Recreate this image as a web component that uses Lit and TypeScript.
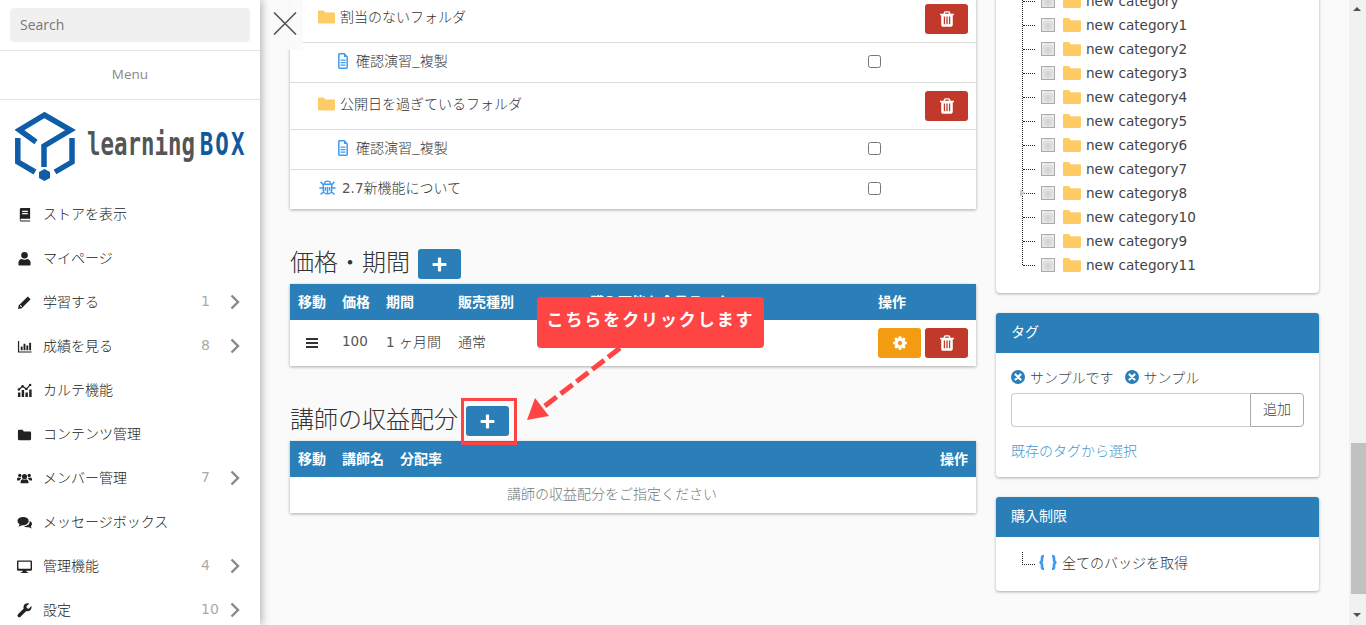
import { LitElement, html, css, svg } from "lit";
import { customElement } from "lit/decorators.js";

const TRASH = "M704 1376v-704q0-14-9-23t-23-9h-64q-14 0-23 9t-9 23v704q0 14 9 23t23 9h64q14 0 23-9t9-23zm256 0v-704q0-14-9-23t-23-9h-64q-14 0-23 9t-9 23v704q0 14 9 23t23 9h64q14 0 23-9t9-23zm256 0v-704q0-14-9-23t-23-9h-64q-14 0-23 9t-9 23v704q0 14 9 23t23 9h64q14 0 23-9t9-23zm-544-992h448l-48-117q-7-9-17-11h-317q-10 2-17 11zm928 32v64q0 14-9 23t-23 9h-96v948q0 83-47 143.500t-113 60.500h-832q-66 0-113-58.500t-47-141.500v-952h-96q-14 0-23-9t-9-23v-64q0-14 9-23t23-9h309l70-167q15-37 54-63t79-26h320q40 0 79 26t54 63l70 167h309q14 0 23 9t9 23z";
const COG = "M1152 896q0-106-75-181t-181-75-181 75-75 181 75 181 181 75 181-75 75-181zm512-109v222q0 12-8 23t-20 13l-185 28q-19 54-39 91 35 50 107 138 10 12 10 25t-9 23q-27 37-99 108t-94 71q-12 0-26-9l-138-108q-44 23-91 38-16 136-29 186-7 28-36 28h-222q-14 0-24.500-8.500t-11.500-21.500l-28-184q-49-16-90-37l-141 107q-10 9-25 9-14 0-25-11-126-114-165-168-7-10-7-23 0-12 8-23 15-21 51-66.500t54-70.500q-27-50-41-99l-183-27q-13-2-21-12.500t-8-23.500v-222q0-12 8-23t19-13l186-28q14-46 39-92-40-57-107-138-10-12-10-24 0-10 9-23 26-36 98.500-107.500t94.500-71.500q13 0 26 10l138 107q44-23 91-38 16-136 29-186 7-28 36-28h222q14 0 24.500 8.500t11.500 21.500l28 184q49 16 90 37l142-107q9-9 24-9 13 0 25 10 129 119 165 170 7 8 7 22 0 12-8 23-15 21-51 66.500t-54 70.500q26 50 41 98l183 28q13 2 21 12.500t8 23.500z";

const icons: Record<string, unknown> = {
  book: svg`<path d="M3 2.500A1.500 1.500 0 0 1 4.500 1H14v11.500H4.500a.9.9 0 0 0 0 1.800H14V15.500H4.500A1.800 1.800 0 0 1 3 14z"/><path fill="#fff" d="M5.500 4h6v1.200h-6zM5.500 6.500h6v1.200h-6z"/>`,
  user: svg`<circle cx="8" cy="4.500" r="3.500"/><path d="M1.500 14.500v-2c0-2.500 2-4 3.500-4 .8.500 1.800.9 3 .9s2.200-.4 3-.9c1.500 0 3.500 1.500 3.500 4v2c0 .6-.4 1-1 1h-11c-.6 0-1-.4-1-1z"/>`,
  pencil: svg`<path d="M11.500 1.500l3 3-9.500 9.500-4 1 1-4z"/><path fill="#fff" d="M3 11.500l.8-.8 1.500 1.500-.8.800z"/>`,
  chart: svg`<path d="M1 2h1.300v11.200H15.500V14.500H1z"/><path d="M4 8h2v4H4zM7 5h2v7H7zM10 7h2v5h-2zM13 4h2v8h-2z"/>`,
  karte: svg`<path d="M1 10h2.600v5H1zM5 7.500h2.600V15H5zM9 10h2.600v5H9zM13 7h2.600v8H13z"/><path fill="none" stroke="currentColor" stroke-width="1.300" d="M2 7l4-3.500 4 3 4-4.500"/><circle cx="2" cy="7" r="1.300"/><circle cx="6" cy="3.500" r="1.300"/><circle cx="10" cy="6.500" r="1.300"/><circle cx="14" cy="2" r="1.300"/>`,
  folder: svg`<path d="M1 4.200C1 3.500 1.500 3 2.200 3h3.600l1.500 1.700h6.500c.7 0 1.200.5 1.200 1.200v6.900c0 .7-.5 1.200-1.200 1.200H2.200c-.7 0-1.200-.5-1.200-1.200z"/>`,
  users: svg`<circle cx="8" cy="6" r="2.700"/><circle cx="3" cy="4.800" r="1.800"/><circle cx="13" cy="4.800" r="1.800"/><path d="M3.800 13v-1.500c0-1.700 1.300-2.800 2.500-2.800.5.300 1 .5 1.700.5s1.200-.2 1.700-.5c1.200 0 2.500 1.100 2.500 2.800V13z"/><path d="M0 10V8.800C0 7.700.8 7 1.700 7c.4.300.8.400 1.300.4.300 0 .5 0 .8-.1.200.4.400.7.700 1-1 .4-1.700 1.200-2 1.700zM16 10V8.800c0-1.100-.8-1.800-1.700-1.800-.4.300-.8.400-1.300.4-.3 0-.5 0-.8-.1-.2.4-.4.7-.7 1 1 .4 1.700 1.200 2 1.700z"/>`,
  comments: svg`<ellipse cx="6.500" cy="6.500" rx="6" ry="4.500"/><path d="M3 9.500l-1.500 3 4-1.500z"/><path d="M13.500 6.300c1.500.7 2.500 1.900 2.500 3.200 0 1-.5 1.800-1.300 2.500l1 2.300-3-1.300c-1.900.4-4 0-5.200-1.100 3.500-.1 6.500-2.400 6-5.600z"/>`,
  desktop: svg`<path fill-rule="evenodd" d="M0 2.800C0 2.100.5 1.500 1.200 1.500h13.600c.7 0 1.200.6 1.200 1.300v8.400c0 .7-.5 1.300-1.200 1.300H10l.4 1.500h1.600v1H4v-1h1.600l.4-1.500H1.200C.5 12.500 0 11.900 0 11.200zM1.500 3v7.500h13V3z"/>`,
  wrench: svg`<path d="M15.500 4.500c0 2.500-2 4.300-4.300 4.300-.5 0-.9-.1-1.300-.2L3.800 14.700c-.8.800-2 .8-2.700 0-.8-.8-.8-2 0-2.700l6.100-6.100c-.2-.5-.3-1-.3-1.500C6.900 2.100 8.900.3 11.200.3c.6 0 1.200.1 1.700.4L10 3.500l.5 2 2 .6 2.800-2.900c.1.300.2.700.2 1.300z"/>`,
};

function icon(name: string) {
  return html`<svg class="micon" viewBox="0 0 16 16" fill="currentColor">${icons[name]}</svg>`;
}
const folderIcon = (cls: string) => html`<svg class=${cls} viewBox="0 0 18 14"><path fill="#ffcb66" d="M0 1.200C0 .5.500 0 1.200 0h4.600l2 2.200h9C17.500 2.200 18 2.700 18 3.400v9.400c0 .7-.5 1.200-1.200 1.200H1.200C.5 14 0 13.500 0 12.800z"/></svg>`;
const docIcon = html`<svg class="doc" viewBox="0 0 10 16"><path fill="none" stroke="#3f9bf2" stroke-width="1.500" d="M.8 1.500c0-.4.3-.7.7-.7h4.800L9.200 4v10.500c0 .4-.3.7-.7.7h-7c-.4 0-.7-.3-.7-.7z"/><path fill="#3f9bf2" d="M6 .8L9.200 4H6zM2.500 6.500h5v1.300h-5zM2.500 9h5v1.300h-5zM2.500 11.500h5v1.300h-5z"/></svg>`;
const trash = html`<svg class="tb" viewBox="0 0 1792 1792" fill="#fff"><path d=${TRASH}/></svg>`;
const cog = html`<svg class="bi" viewBox="0 0 1792 1792" fill="#fff"><path d=${COG}/></svg>`;
const plus = html`<svg class="plus" viewBox="0 0 14 14" fill="#fff"><path d="M5.500 1.200c0-.4.300-.7.700-.7h1.600c.4 0 .7.300.7.700v4.300h4.300c.4 0 .7.300.7.700v1.600c0 .4-.3.700-.7.700H8.500v4.300c0 .4-.3.700-.7.700H6.200c-.4 0-.7-.3-.7-.7V8.500H1.200c-.4 0-.7-.3-.7-.7V6.200c0-.4.300-.7.700-.7h4.300z"/></svg>`;
const xcircle = html`<svg class="xc" viewBox="0 0 14 14"><circle cx="7" cy="7" r="7" fill="#2a7fb8"/><path d="M4.500 4.500l5 5M9.500 4.500l-5 5" stroke="#fff" stroke-width="2.200" stroke-linecap="round"/></svg>`;

const MENU: [string, string, string][] = [
  ["book", "ストアを表示", ""],
  ["user", "マイページ", ""],
  ["pencil", "学習する", "1"],
  ["chart", "成績を見る", "8"],
  ["karte", "カルテ機能", ""],
  ["folder", "コンテンツ管理", ""],
  ["users", "メンバー管理", "7"],
  ["comments", "メッセージボックス", ""],
  ["desktop", "管理機能", "4"],
  ["wrench", "設定", "10"],
];
const CATS = ["new category", "new category1", "new category2", "new category3", "new category4", "new category5", "new category6", "new category7", "new category8", "new category10", "new category9", "new category11"];

@customElement("app-root")
export class AppRoot extends LitElement {
  static styles = css`
    :host { display: block; width: 1366px; height: 625px; overflow: hidden; position: relative; background: #fafafa; color: #333;
      font: 300 14px/20px "Noto Sans CJK JP", sans-serif; }
    * { box-sizing: border-box; }
    .page { display: flex; height: 625px; overflow: hidden; }

    .side { flex: none; width: 260px; height: 625px; background: #fff; box-shadow: 2px 0 8px rgba(0,0,0,.28); position: relative; z-index: 2; overflow: hidden; }
    .searchwrap { height: 51px; padding: 8px 10px; border-bottom: 1px solid #e4e4e4; }
    .search { height: 34px; background: #f0f0f0; border-radius: 4px; padding: 0 10px; font: 14px/34px "Open Sans", sans-serif; color: #777; }
    .menuhead { height: 49px; border-bottom: 1px solid #e4e4e4; text-align: center; font: 13.500px/47px "Open Sans", sans-serif; color: #888; }
    .logo { height: 92px; display: flex; align-items: flex-start; padding: 12px 0 0 15px; }
    .logo svg { width: 62px; height: 69px; flex: none; }
    .logotext { font: 700 32px/38px "DejaVu Sans Mono", monospace; color: #555; transform: scaleX(.7); transform-origin: left; white-space: nowrap; margin: 13px 0 0 10px; }
    .logotext b { color: #11589f; font-weight: 700; margin-left: 7px; letter-spacing: 3px; }
    .mi { height: 44px; display: flex; align-items: center; padding: 0 0 0 17px; color: #222; }
    .micon { width: 15px; height: 15px; flex: none; margin-right: 11px; color: #222; }
    .mi .lbl { flex: 1; margin-top: -2px; }
    .mi .cnt { width: 29px; color: #aaa; font: 400 14px/20px "DejaVu Sans", sans-serif; margin-top: -2px; }
    .mi .chev { width: 10px; height: 16px; margin-right: 20px; flex: none; }

    .content { flex: 1; display: flex; gap: 20px; padding-left: 30px; }
    .col1 { flex: none; width: 686px; margin-top: -4px; }
    .col2 { flex: none; width: 323px; margin-top: -20px; display: flex; flex-direction: column; gap: 20px; }
    .sbar { flex: none; width: 17px; margin-left: 10px; background: #f1f1f1; position: relative; }
    .card { background: #fff; box-shadow: 0 1px 3px rgba(0,0,0,.32); }

    .row { display: flex; align-items: center; padding-right: 8px; border-bottom: 1px solid #ddd; color: #333; }
    .row:last-child { border-bottom: 0; }
    .h47 { height: 47px; padding-left: 28px; }
    .h40 { height: 40px; }
    .h39 { height: 39px; }
    .nest { padding-left: 48px; }
    .leaf { padding-left: 29px; }
    .rtext { flex: none; width: 520px; margin-top: -6px; }
    .rsub { flex: none; margin-top: -5px; }
    .fold { width: 17px; height: 14px; flex: none; margin: -5px 5px 0 0; }
    .doc { width: 10px; height: 16px; flex: none; margin: -4px 8px 0 0; }
    .bug { width: 17px; height: 17px; flex: none; margin: -4px 6px 0 0; }
    .cb { width: 13px; height: 13px; border: 1px solid #767676; border-radius: 2.500px; background: #fff; flex: none; margin: -2px 87px 0 auto; }
    .num { font: 400 13.500px/20px "DejaVu Sans", sans-serif; color: #555; }
    .btn { display: flex; align-items: center; justify-content: center; width: 43px; height: 30px; border-radius: 3px; flex: none; border: 0; padding: 0; }
    .ml { margin-left: auto; }
    .red { background: #c0392b; }
    .blue { background: #2a7fb8; }
    .orange { background: #f39c12; }
    .bi { width: 16px; height: 16px; }
    .tb { width: 18px; height: 18px; }
    .plus { width: 15px; height: 15px; }

    .heading { display: flex; align-items: center; gap: 8px; height: 30px; margin: 40px 0 5px; font-size: 24px; color: #333; }
    .heading span { margin: -6px 0 0 -1px; padding-left: 1px; }
    .thead { height: 36px; background: #2a7fb8; color: #fff; font-weight: 700; align-items: center; padding: 0 8px 2px; display: grid; }
    .tbody { height: 46px; display: grid; align-items: center; padding: 0 8px; color: #333; }
    .tbody > span:not(.ops) { margin-top: -4px; }
    .price { grid-template-columns: 44px 44px 72px 132px 288px 1fr; }
    .teach { grid-template-columns: 44px 58px 1fr auto; }
    .ops { display: flex; gap: 4px; }
    .bars { width: 12px; height: 10px; margin-left: 8px; }
    .empty { height: 36px; text-align: center; line-height: 33px; color: #777; padding-right: 42px; }

    .treecard { padding: 9px 0 16px; border-radius: 0 0 4px 4px; position: relative; }
    .tr { height: 24px; display: flex; align-items: center; padding-left: 45px; font: 13.600px/20px "DejaVu Sans", sans-serif; color: #444; position: relative; }
    .tline { position: absolute; left: 26px; top: 0; bottom: 28px; border-left: 1px dotted #222; }
    .tr::before { content: ""; position: absolute; left: 27px; top: 12px; width: 12px; border-top: 1px dotted #222; }
    .tick { width: 14px; height: 14px; border: 1px solid #aaa; background: radial-gradient(circle at 50% 60%, #cfcfcf, #f2f2f2); flex: none; margin-right: 8px; }
    .tf { width: 18px; height: 14px; flex: none; margin-right: 5px; }
    .tri { position: absolute; left: 24px; top: 8px; width: 0; height: 0; border-left: 5px solid #ccc; border-top: 4px solid transparent; border-bottom: 4px solid transparent; }

    .ph { height: 40px; background: #2a7fb8; color: #fff; padding: 0 15px; font-weight: 400; line-height: 36px; border-radius: 3px 3px 0 0; }
    .pcard { border-radius: 3px; }
    .tagbody { height: 124px; padding: 14px 15px 0; }
    .chips { display: flex; align-items: center; gap: 5px; height: 20px; color: #444; }
    .xc { width: 14px; height: 14px; flex: none; }
    .chips span { margin-right: 6px; }
    .ig { display: flex; height: 34px; margin-top: 6px; width: 293px; }
    .ig .inp { flex: 1; border: 1px solid #ccc; border-right: 0; border-radius: 4px 0 0 4px; background: #fff; }
    .ig .add { width: 54px; border: 1px solid #aaa; border-radius: 0 4px 4px 0; text-align: center; line-height: 28px; color: #444; background: #fff; }
    .link { margin-top: 13px; color: #4a98cc; }
    .limit { height: 54px; padding: 15px 0 0 26px; display: flex; align-items: flex-start; position: relative; }
    .corner { width: 13px; height: 13px; border-left: 1px dotted #222; border-bottom: 1px dotted #222; flex: none; margin: 0 3px 0 0; }
    .brace { width: 20px; height: 15px; flex: none; margin: 3px 4px 0 0; }

    .closebox { position: absolute; left: 260px; top: 0; width: 43px; height: 50px; background: rgba(250,250,250,.95); z-index: 1; }
    .closex { position: absolute; left: 273px; top: 12px; width: 24px; height: 23px; z-index: 3; }
    .thumb { position: absolute; left: 2px; right: 0; top: 443px; height: 151px; background: #c1c1c1; }
    .ar { position: absolute; left: 4px; width: 0; height: 0; border-left: 4px solid transparent; border-right: 4px solid transparent; }
    .ar.up { top: 7px; border-bottom: 4px solid #505050; }
    .ar.dn { top: 613px; border-top: 4px solid #505050; }

    .callout { position: absolute; left: 537px; top: 297px; width: 227px; height: 51px; background: #ff4444; border-radius: 4px; color: #fff; font-weight: 700; font-size: 17px; letter-spacing: 1.900px; line-height: 44px; text-align: center; z-index: 4; white-space: nowrap; }
    .hl { position: absolute; left: 461px; top: 398px; width: 56px; height: 47px; border: 3px solid #ff4444; z-index: 4; }
    .arrow { position: absolute; left: 515px; top: 340px; width: 120px; height: 90px; z-index: 3; }
  `;

  private chev() {
    return html`<svg class="chev" viewBox="0 0 10 16"><path d="M1.500 1.500L8 8l-6.500 6.500" fill="none" stroke="#888" stroke-width="2.400"/></svg>`;
  }

  render() {
    return html`
      <div class="page">
        <aside class="side">
          <div class="searchwrap"><div class="search">Search</div></div>
          <div class="menuhead">Menu</div>
          <div class="logo">
            <svg viewBox="15 112 62 69" fill="none" stroke="#0f5ca8" stroke-width="5.500">
              <path d="M36 142L19.500 130 44.500 115 70.500 130 44 146V167"/>
              <path d="M17.800 138V162L35 172M72 138V162L55 172"/>
              <path d="M44.500 169l5.500 3v6l-5.500 3-5.500-3v-6z" fill="#0f5ca8" stroke="none"/>
            </svg>
            <div class="logotext">learning<b>BOX</b></div>
          </div>
          ${MENU.map(([i, l, c]) => html`
            <div class="mi">${icon(i)}<span class="lbl">${l}</span>${c ? html`<span class="cnt">${c}</span>${this.chev()}` : ""}</div>
          `)}
        </aside>

        <main class="content">
          <section class="col1">
            <div class="card">
              <div class="row h47">${folderIcon("fold")}<span class="rtext">割当のないフォルダ</span><button class="btn red ml">${trash}</button></div>
              <div class="row h40 nest">${docIcon}<span class="rsub">確認演習_複製</span><span class="cb"></span></div>
              <div class="row h47">${folderIcon("fold")}<span class="rtext">公開日を過ぎているフォルダ</span><button class="btn red ml">${trash}</button></div>
              <div class="row h40 nest">${docIcon}<span class="rsub">確認演習_複製</span><span class="cb"></span></div>
              <div class="row h39 leaf">
                <svg class="bug" viewBox="0.500 2 16 15" fill="none" stroke="#3f9bf2" stroke-width="1.400"><path d="M4.500 6.500h8v5a4 4 0 0 1-8 0zM5.500 6.500a3 3 0 0 1 6 0M8.500 9v6M2 4l2.500 3M15 4l-2.500 3M.8 10h3.700M16.200 10h-3.700M2 16l3-2.500M15 16l-3-2.500M6.500 9v3.500M10.500 9v3.500"/></svg>
                <span class="rsub"><span class="num">2.7</span>新機能について</span><span class="cb"></span>
              </div>
            </div>

            <div class="heading"><span>価格・期間</span><button class="btn blue">${plus}</button></div>
            <div class="card">
              <div class="thead price"><span>移動</span><span>価格</span><span>期間</span><span>販売種別</span><span>購入可能な会員ランク</span><span>操作</span></div>
              <div class="tbody price">
                <svg class="bars" viewBox="0 0 12 10" fill="#333"><path d="M0 0h12v2H0zM0 4h12v2H0zM0 8h12v2H0z"/></svg>
                <span class="num">100</span><span><span class="num">1 </span>ヶ月間</span><span>通常</span><span></span>
                <span class="ops"><button class="btn orange">${cog}</button><button class="btn red">${trash}</button></span>
              </div>
            </div>

            <div class="heading"><span>講師の収益配分</span><button class="btn blue">${plus}</button></div>
            <div class="card">
              <div class="thead teach"><span>移動</span><span>講師名</span><span>分配率</span><span>操作</span></div>
              <div class="empty">講師の収益配分をご指定ください</div>
            </div>
          </section>

          <section class="col2">
            <div class="card treecard">
              <div class="tline"></div>
              ${CATS.map((c, i) => html`
                <div class="tr">${i === 8 ? html`<span class="tri"></span>` : ""}<span class="tick"></span>${folderIcon("tf")}${c}</div>
              `)}
            </div>
            <div class="card pcard">
              <div class="ph">タグ</div>
              <div class="tagbody">
                <div class="chips">${xcircle}<span>サンプルです</span>${xcircle}<span>サンプル</span></div>
                <div class="ig"><div class="inp"></div><div class="add">追加</div></div>
                <div class="link">既存のタグから選択</div>
              </div>
            </div>
            <div class="card pcard">
              <div class="ph">購入制限</div>
              <div class="limit">
                <span class="corner"></span>
                <svg class="brace" viewBox="0 0 20 15" fill="none" stroke="#3f9bf2" stroke-width="2.700"><path d="M6 1C3.500 1 4 3 4 5s-1 2.500-2.500 2.500C3 7.500 4 8 4 10s-.5 4 2 4M14 1c2.500 0 2 2 2 4s1 2.500 2.500 2.500C17 7.500 16 8 16 10s.5 4-2 4"/></svg>
                <span>全てのバッジを取得</span>
              </div>
            </div>
          </section>

          <div class="sbar"><div class="ar up"></div><div class="thumb"></div><div class="ar dn"></div></div>
        </main>
      </div>

      <div class="closebox"></div>
      <svg class="closex" viewBox="0 0 24 23" stroke="#555" stroke-width="1.600"><path d="M1 .5l22 22M23 .5l-22 22"/></svg>
      <div class="callout">こちらをクリックします</div>
      <div class="hl"></div>
      <svg class="arrow" viewBox="0 0 120 90">
        <path d="M105 8L26 69" stroke="#ff4444" stroke-width="5" stroke-dasharray="15 5" fill="none"/>
        <path d="M12 80L20 58 34 76z" fill="#ff4444"/>
      </svg>
    `;
  }
}
